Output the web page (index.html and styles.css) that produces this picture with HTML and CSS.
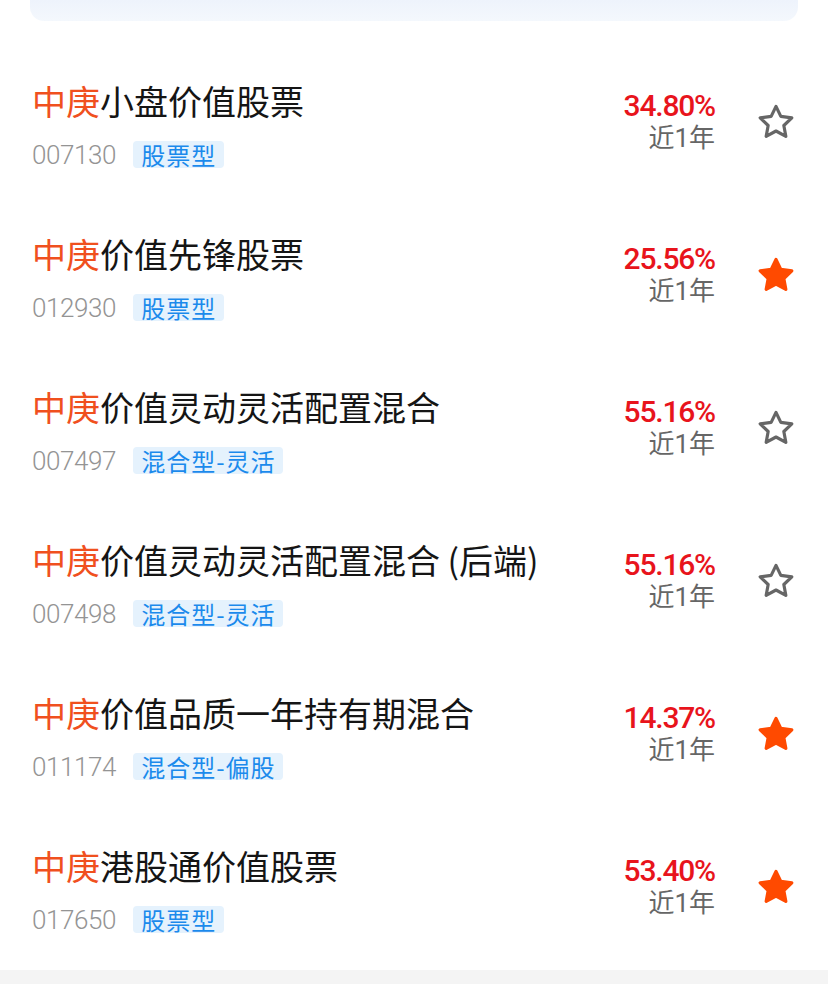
FILE: index.html
```html
<!DOCTYPE html>
<html lang="zh-CN">
<head>
<meta charset="utf-8">
<link rel="stylesheet" href="styles.css">
</head>
<body>
<div class="top-card"></div>
<ul class="fund-list">
  <li class="fund">
    <div class="info">
      <div class="name"><span class="brand">中庚</span>小盘价值股票</div>
      <div class="meta"><span class="code">007130</span><span class="tag">股票型</span></div>
    </div>
    <div class="rate"><div class="pct">34.80%</div><div class="period">近1年</div></div>
    <svg class="star" viewBox="0 0 24 24"><path class="outline" d="M12 2.6l2.9 6 6.6.9-4.8 4.6 1.2 6.5L12 17.4l-5.9 3.2 1.2-6.5-4.8-4.6 6.6-.9z"/></svg>
  </li>
  <li class="fund">
    <div class="info">
      <div class="name"><span class="brand">中庚</span>价值先锋股票</div>
      <div class="meta"><span class="code">012930</span><span class="tag">股票型</span></div>
    </div>
    <div class="rate"><div class="pct">25.56%</div><div class="period">近1年</div></div>
    <svg class="star" viewBox="0 0 24 24"><path class="filled" d="M12 2.6l2.9 6 6.6.9-4.8 4.6 1.2 6.5L12 17.4l-5.9 3.2 1.2-6.5-4.8-4.6 6.6-.9z"/></svg>
  </li>
  <li class="fund">
    <div class="info">
      <div class="name"><span class="brand">中庚</span>价值灵动灵活配置混合</div>
      <div class="meta"><span class="code">007497</span><span class="tag">混合型-灵活</span></div>
    </div>
    <div class="rate"><div class="pct">55.16%</div><div class="period">近1年</div></div>
    <svg class="star" viewBox="0 0 24 24"><path class="outline" d="M12 2.6l2.9 6 6.6.9-4.8 4.6 1.2 6.5L12 17.4l-5.9 3.2 1.2-6.5-4.8-4.6 6.6-.9z"/></svg>
  </li>
  <li class="fund">
    <div class="info">
      <div class="name"><span class="brand">中庚</span>价值灵动灵活配置混合 (后端)</div>
      <div class="meta"><span class="code">007498</span><span class="tag">混合型-灵活</span></div>
    </div>
    <div class="rate"><div class="pct">55.16%</div><div class="period">近1年</div></div>
    <svg class="star" viewBox="0 0 24 24"><path class="outline" d="M12 2.6l2.9 6 6.6.9-4.8 4.6 1.2 6.5L12 17.4l-5.9 3.2 1.2-6.5-4.8-4.6 6.6-.9z"/></svg>
  </li>
  <li class="fund">
    <div class="info">
      <div class="name"><span class="brand">中庚</span>价值品质一年持有期混合</div>
      <div class="meta"><span class="code">011174</span><span class="tag">混合型-偏股</span></div>
    </div>
    <div class="rate"><div class="pct">14.37%</div><div class="period">近1年</div></div>
    <svg class="star" viewBox="0 0 24 24"><path class="filled" d="M12 2.6l2.9 6 6.6.9-4.8 4.6 1.2 6.5L12 17.4l-5.9 3.2 1.2-6.5-4.8-4.6 6.6-.9z"/></svg>
  </li>
  <li class="fund">
    <div class="info">
      <div class="name"><span class="brand">中庚</span>港股通价值股票</div>
      <div class="meta"><span class="code">017650</span><span class="tag">股票型</span></div>
    </div>
    <div class="rate"><div class="pct">53.40%</div><div class="period">近1年</div></div>
    <svg class="star" viewBox="0 0 24 24"><path class="filled" d="M12 2.6l2.9 6 6.6.9-4.8 4.6 1.2 6.5L12 17.4l-5.9 3.2 1.2-6.5-4.8-4.6 6.6-.9z"/></svg>
  </li>
</ul>
<div class="bottom-band"></div>
</body>
</html>
```

FILE: styles.css
```css
* { box-sizing: border-box; }
html, body {
  margin: 0;
  padding: 0;
  background: #ffffff;
  font-family: "Roboto", "Noto Sans CJK SC", sans-serif;
}
body {
  width: 828px;
  height: 984px;
  overflow: hidden;
  display: flex;
  flex-direction: column;
}
.top-card {
  height: 21px;
  margin: 0 30px;
  border-radius: 0 0 14px 14px;
  background: linear-gradient(180deg, #eef3fc 0%, #f4f8fd 100%);
}
.fund-list {
  list-style: none;
  margin: 0;
  padding: 27px 0 0 0;
  flex: 1;
}
.fund {
  height: 153px;
  display: flex;
  align-items: center;
  padding: 0 32px 0 32px;
}
.info {
  flex: 1;
  display: flex;
  flex-direction: column;
  gap: 20px;
}
.name {
  font-family: "Noto Sans CJK SC", sans-serif;
  font-size: 34px;
  line-height: 40px;
  color: #151515;
  white-space: nowrap;
}
.brand { color: #f0501e; }
.meta {
  display: flex;
  align-items: center;
  gap: 17px;
}
.code {
  font-size: 26px;
  line-height: 28px;
  font-weight: 300;
  color: #949494;
  letter-spacing: -0.4px;
}
.tag {
  font-family: "Noto Sans CJK SC", sans-serif;
  font-size: 24px;
  line-height: 27px;
  padding: 0 8px;
  letter-spacing: 1px;
  border-radius: 4px;
  background: #e5f2fd;
  color: #1b8aec;
}
.rate {
  display: flex;
  flex-direction: column;
  align-items: flex-end;
  margin-top: -8px;
}
.pct {
  font-size: 30px;
  font-weight: 500;
  line-height: 35px;
  color: #e8141c;
  letter-spacing: -1.2px;
}
.period {
  font-family: "Roboto", "Noto Sans CJK SC", sans-serif;
  font-size: 26px;
  line-height: 31px;
  color: #666666;
}
.star {
  width: 40px;
  height: 40px;
  margin-left: 41px;
  margin-top: -6px;
  flex: none;
}
.star .outline {
  fill: none;
  stroke: #666666;
  stroke-width: 1.9;
  stroke-linejoin: round;
}
.star .filled {
  fill: #ff4a00;
  stroke: #ff4a00;
  stroke-width: 1.9;
  stroke-linejoin: round;
}
.bottom-band {
  height: 14px;
  background: #f4f4f4;
  flex: none;
}
```
